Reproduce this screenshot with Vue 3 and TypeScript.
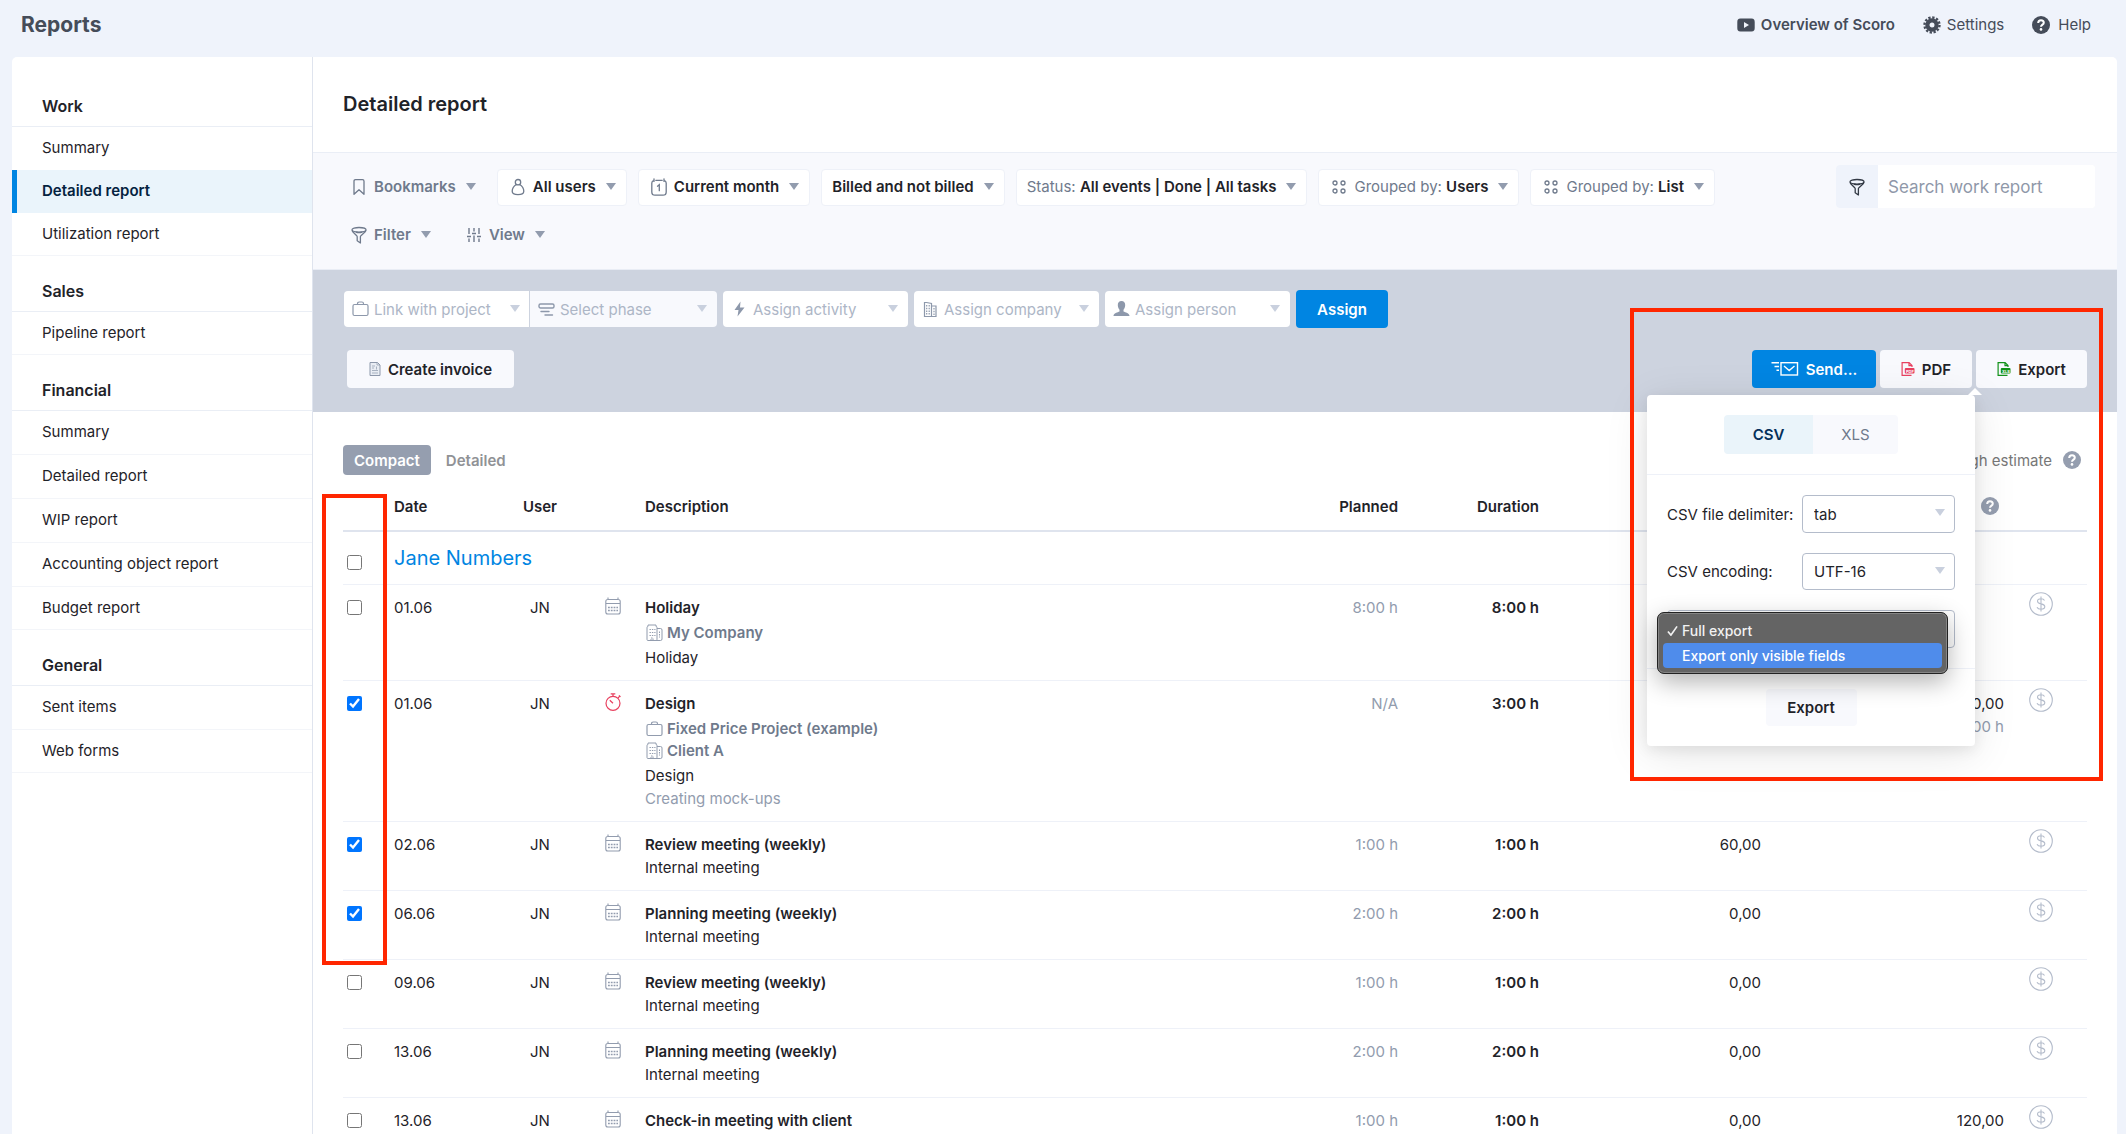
<script setup lang="ts">
import { ref } from 'vue'

interface NavGroup {
  title: string
  items: string[]
  ruled: boolean
}

interface Chip {
  icon?: string
  prefix?: string
  label: string
  plain?: boolean
}

interface Link {
  icon: string
  label: string
}

interface Row {
  id: number
  checked: boolean
  date: string
  kind: 'calendar' | 'stopwatch'
  title: string
  links?: Link[]
  activity?: string
  note?: string
  planned: string
  duration: string
  cost?: string
  income?: string
  incomeTime?: string
}

const navGroups: NavGroup[] = [
  { title: 'Work', items: ['Summary', 'Detailed report', 'Utilization report'], ruled: false },
  { title: 'Sales', items: ['Pipeline report'], ruled: true },
  {
    title: 'Financial',
    items: ['Summary', 'Detailed report', 'WIP report', 'Accounting object report', 'Budget report'],
    ruled: true,
  },
  { title: 'General', items: ['Sent items', 'Web forms'], ruled: true },
]

const chipRows: Chip[][] = [
  [
    { icon: 'bookmark', label: 'Bookmarks', plain: true },
    { icon: 'user', label: 'All users' },
    { icon: 'day', label: 'Current month' },
    { label: 'Billed and not billed' },
    { prefix: 'Status:', label: 'All events | Done | All tasks' },
    { icon: 'group', prefix: 'Grouped by:', label: 'Users' },
    { icon: 'group', prefix: 'Grouped by:', label: 'List' },
  ],
  [
    { icon: 'funnel', label: 'Filter', plain: true },
    { icon: 'sliders', label: 'View', plain: true },
  ],
]

const assignFields = [
  { icon: 'briefcase', label: 'Link with project', cls: 'joined-left' },
  { icon: 'phase', label: 'Select phase', cls: 'joined-right' },
  { icon: 'bolt', label: 'Assign activity', cls: '' },
  { icon: 'office', label: 'Assign company', cls: '' },
  { icon: 'person', label: 'Assign person', cls: '' },
]

const rows = ref<Row[]>([
  { id: 1, checked: false, date: '01.06', kind: 'calendar', title: 'Holiday', links: [{ icon: 'building', label: 'My Company' }], activity: 'Holiday', planned: '8:00 h', duration: '8:00 h' },
  { id: 2, checked: true, date: '01.06', kind: 'stopwatch', title: 'Design', links: [{ icon: 'briefcase', label: 'Fixed Price Project (example)' }, { icon: 'building', label: 'Client A' }], activity: 'Design', note: 'Creating mock-ups', planned: 'N/A', duration: '3:00 h', income: '360,00', incomeTime: '3:00 h' },
  { id: 3, checked: true, date: '02.06', kind: 'calendar', title: 'Review meeting (weekly)', activity: 'Internal meeting', planned: '1:00 h', duration: '1:00 h', cost: '60,00' },
  { id: 4, checked: true, date: '06.06', kind: 'calendar', title: 'Planning meeting (weekly)', activity: 'Internal meeting', planned: '2:00 h', duration: '2:00 h', cost: '0,00' },
  { id: 5, checked: false, date: '09.06', kind: 'calendar', title: 'Review meeting (weekly)', activity: 'Internal meeting', planned: '1:00 h', duration: '1:00 h', cost: '0,00' },
  { id: 6, checked: false, date: '13.06', kind: 'calendar', title: 'Planning meeting (weekly)', activity: 'Internal meeting', planned: '2:00 h', duration: '2:00 h', cost: '0,00' },
  { id: 7, checked: false, date: '13.06', kind: 'calendar', title: 'Check-in meeting with client', planned: '1:00 h', duration: '1:00 h', cost: '0,00', income: '120,00' },
])

const groupChecked = ref(false)
const delimiter = ref('tab')
const encoding = ref('UTF-16')
const scopeOptions = ['Full export', 'Export only visible fields']
const scope = ref(scopeOptions[0])
const hovered = ref(scopeOptions[1])
</script>

<template>
  <svg class="sprite" aria-hidden="true">
    <symbol id="caret" viewBox="0 0 10 7"><path d="M0 0h10L5 7z" fill="currentColor" /></symbol>
    <symbol id="bookmark" viewBox="0 0 16 18">
      <path d="M3 3.2Q3 1.7 4.500 1.700h7Q13 1.700 13 3.200V16.300L8 11.800 3 16.300z" fill="none" stroke="currentColor" stroke-width="1.300" stroke-linejoin="round" />
    </symbol>
    <symbol id="user" viewBox="0 0 16 18">
      <g fill="none" stroke="currentColor" stroke-width="1.300">
        <circle cx="8" cy="4.200" r="2.700" />
        <path d="M6.300 6.500C4 8 2.200 11 2.200 13.300 2.200 15.800 4.500 16.600 8 16.600s5.800-.8 5.800-3.300C13.800 11 12 8 9.700 6.500" />
      </g>
    </symbol>
    <symbol id="day" viewBox="0 0 16 18">
      <g fill="none" stroke="currentColor" stroke-width="1.300" stroke-linecap="round">
        <path d="M3 2.300C1.300 2.800.8 3.500.8 5v9c0 2 1 3.200 3.200 3.200h8c2.200 0 3.200-1.200 3.200-3.200V5c0-1.500-.5-2.200-2.200-2.700M4.800 2.300h6.400M3 .8v2.600M13 .8v2.600" />
        <path d="M6.500 8.200 8.300 6.700v6" />
      </g>
    </symbol>
    <symbol id="group" viewBox="0 0 16 18">
      <g fill="none" stroke="currentColor" stroke-width="1.300">
        <circle cx="4" cy="5" r="2" /><circle cx="12" cy="5" r="2" />
        <circle cx="4" cy="13" r="2" /><circle cx="12" cy="13" r="2" />
      </g>
    </symbol>
    <symbol id="funnel" viewBox="0 0 16 18">
      <g fill="none" stroke="currentColor" stroke-width="1.300" stroke-linejoin="round">
        <ellipse cx="8" cy="3.800" rx="7" ry="2.300" />
        <path d="M1 4.300C1.500 6.500 6 9 6.200 10.500v4.300l3.200 2.200v-6.500C9.600 9 14.500 6.500 15 4.300" />
        <path d="M4.800 6.200c2 .6 4.400.6 6.400 0" />
      </g>
    </symbol>
    <symbol id="sliders" viewBox="0 0 16 18">
      <path d="M3 2v6M8 2v3.500M13 2v6M3 12.500V16M8 9.500V16M13 12.500V16M1 10.500h4M6 7.500h4M11 10.500h4" fill="none" stroke="currentColor" stroke-width="1.400" />
    </symbol>
    <symbol id="briefcase" viewBox="0 0 17 18">
      <g fill="none" stroke="currentColor" stroke-width="1.200">
        <rect x="1" y="4.500" width="15" height="11" rx="1.500" />
        <path d="M5.500 4.500v-.8c0-1 .6-1.700 1.600-1.700h2.800c1 0 1.600.7 1.600 1.700v.8" />
      </g>
    </symbol>
    <symbol id="phase" viewBox="0 0 17 18">
      <g fill="none" stroke="currentColor" stroke-width="1.400" stroke-linecap="round">
        <rect x="1" y="4" width="15" height="4" rx="1.500" />
        <path d="M3 11.500h8M7 15h7.500" />
      </g>
    </symbol>
    <symbol id="bolt" viewBox="0 0 17 18"><path d="M9.500 1.500 3.500 10h4l-1 6.500 7-9H9z" fill="currentColor" /></symbol>
    <symbol id="office" viewBox="0 0 17 18">
      <g fill="none" stroke="currentColor" stroke-width="1.200">
        <path d="M2.500 16.500v-14h2l5 1v13zM9.500 6h4.500v10.500H9.500" />
        <path d="M4.700 5v10M7.200 5v10M12 8v7" stroke-dasharray="1.500 1.200" />
      </g>
    </symbol>
    <symbol id="building" viewBox="0 0 17 18">
      <g fill="none" stroke="currentColor" stroke-width="1">
        <path d="M1 15.500v-12q0-1 1-1V1h8v1.500q1 0 1 1v12q0 1-1 1H2q-1 0-1-1z" />
        <path d="M11 4.500h3.500q1.500 0 1.500 1.500v9q0 1.500-1.500 1.500H10" />
        <path d="M3.500 5.500h6M3.500 8.500h6M3.500 11.500h6" stroke-dasharray="1.400 1" />
        <path d="M5 16.500V14h2v2.500M13.500 7.500v6" stroke-dasharray="1.500 1" />
      </g>
    </symbol>
    <symbol id="person" viewBox="0 0 17 18">
      <path d="M8.500 1C11 1 12.300 2.800 12.200 5.200 12.100 7.500 11.200 9 10.500 9.800v1.700c1.800.9 6 1.500 6 4.500H.5c0-3 4.200-3.600 6-4.500V9.800C5.800 9 4.900 7.500 4.800 5.200 4.700 2.800 6 1 8.500 1z" fill="currentColor" />
    </symbol>
    <symbol id="invoice" viewBox="0 0 12 16">
      <g fill="none" stroke="currentColor" stroke-width="1">
        <path d="M1 1.500h7.500l2.500 2.500v10.500H1z" fill="#e9edf4" />
        <path d="M8 1.500V4h3M3 5h3M3 7h2M3 9.500h6M3 12h6M7.500 5.500v3" stroke-width=".7" />
      </g>
    </symbol>
    <symbol id="send" viewBox="0 0 28 16">
      <g fill="none" stroke="currentColor" stroke-width="1.400">
        <rect x="10" y="1.700" width="16.500" height="12.300" />
        <path d="m13 5 5.200 4.500L23.500 5M.5 1.700h7.500M3.500 5.500h4.500M5.500 9.300H8" />
      </g>
    </symbol>
    <symbol id="file" viewBox="0 0 14 16">
      <path d="M10.500 14.400H1.100V1.600h7L11 4.500V6M8 1.600v3h3" fill="none" stroke="currentColor" stroke-width="1.200" />
      <rect x="3.800" y="7" width="9.700" height="5.600" rx="1" fill="currentColor" />
    </symbol>
    <symbol id="play" viewBox="0 0 18 14">
      <path fill-rule="evenodd" d="M3.500.5h11C17 .5 17.700 1.700 17.700 4v6c0 2.300-.7 3.500-3.200 3.500h-11C1 13.500.3 12.300.3 10V4C.3 1.700 1 .5 3.500.5zM7 4v6l5-3z" fill="currentColor" />
    </symbol>
    <symbol id="gear" viewBox="0 0 18 18">
      <circle cx="9" cy="9" r="4.600" fill="none" stroke="currentColor" stroke-width="4.200" />
      <circle cx="9" cy="9" r="7.500" fill="none" stroke="currentColor" stroke-width="2.400" stroke-dasharray="2.300 1.627" />
    </symbol>
    <symbol id="help" viewBox="0 0 18 18">
      <circle cx="9" cy="9" r="9" fill="currentColor" />
      <path d="M6.200 7C6.200 5.200 7.400 4.200 9 4.200s2.800 1 2.800 2.500C11.800 8.600 9 8.700 9 10.800" fill="none" stroke="#fff" stroke-width="2" />
      <circle cx="9" cy="13.400" r="1.300" fill="#fff" />
    </symbol>
    <symbol id="calendar" viewBox="0 0 16 18">
      <g fill="none" stroke="currentColor" stroke-width="1.100">
        <path d="M.8 4.500Q.8 2.500 2.800 2.500h10.400q2 0 2 2V15q0 2-2 2H2.800q-2 0-2-2zM.8 6.500h14.400M3 .5v2M13 .5v2" />
        <path d="M3 10.500h10M3 13.500h10" stroke-width="1.500" stroke-dasharray="1.800 1" />
      </g>
    </symbol>
    <symbol id="stopwatch" viewBox="0 0 16 18">
      <g fill="none" stroke="currentColor" stroke-width="1.200">
        <circle cx="8" cy="10.300" r="7" />
        <path d="M8 3.300V1M5.700.8h4.600M13 5l1.800-1.800M14 2.400l1.500 1.500M8 10.300 4.800 7.200" />
      </g>
    </symbol>
    <symbol id="dollar" viewBox="0 0 24 24">
      <g fill="none" stroke="currentColor" stroke-width="1.100">
        <circle cx="12" cy="12" r="11.300" />
        <path d="M15.500 8.500C15 7.300 13.800 6.700 12 6.700c-2 0-3.500.9-3.500 2.500 0 3.600 7.300 1.800 7.300 5.400 0 1.700-1.700 2.700-3.800 2.700-2.200 0-3.500-.9-4-2.100M12 4.500v15" />
      </g>
    </symbol>
    <symbol id="tick" viewBox="0 0 12 12"><path d="m1 7 3.300 4L11 1.500" fill="none" stroke="currentColor" stroke-width="1.800" /></symbol>
  </svg>

  <div class="page">
    <header class="topbar">
      <h1>Reports</h1>
      <nav class="top-links">
        <a href="#overview" class="strong"><svg class="i-play"><use href="#play" /></svg>Overview of Scoro</a>
        <a href="#settings"><svg class="i18"><use href="#gear" /></svg>Settings</a>
        <a href="#help" class="help-link"><svg class="i18"><use href="#help" /></svg>Help</a>
      </nav>
    </header>

    <div class="sheet">
      <aside class="sidebar">
        <section v-for="(g, gi) in navGroups" :key="g.title" :class="{ ruled: g.ruled }">
          <h2>{{ g.title }}</h2>
          <ul>
            <li v-for="(item, i) in g.items" :key="item">
              <a href="#report" :class="{ active: gi === 0 && i === 1 }">{{ item }}</a>
            </li>
          </ul>
        </section>
      </aside>

      <main class="main">
        <div class="title"><h2>Detailed report</h2></div>

        <div class="filters">
          <div class="chips">
            <div v-for="(row, ri) in chipRows" :key="ri" class="chip-row">
              <button v-for="(c, ci) in row" :key="ci" type="button" class="chip" :class="{ plain: c.plain }">
                <svg v-if="c.icon" class="chip-icon"><use :href="'#' + c.icon" /></svg>
                <span><span v-if="c.prefix" class="prefix">{{ c.prefix }}&nbsp;</span>{{ c.label }}</span>
                <svg class="caret"><use href="#caret" /></svg>
              </button>
            </div>
          </div>
          <form class="search" @submit.prevent>
            <button type="button" aria-label="Search filters"><svg class="chip-icon"><use href="#funnel" /></svg></button>
            <input type="search" placeholder="Search work report" aria-label="Search work report" />
          </form>
        </div>

        <div class="bulk">
          <div class="assign">
            <label v-for="f in assignFields" :key="f.label" class="field" :class="f.cls">
              <svg class="field-icon"><use :href="'#' + f.icon" /></svg>
              <select :aria-label="f.label"><option>{{ f.label }}</option></select>
              <svg class="caret"><use href="#caret" /></svg>
            </label>
            <button type="button" class="btn primary assign-btn">Assign</button>
          </div>
          <div class="actions">
            <button type="button" class="btn invoice"><svg class="i-invoice"><use href="#invoice" /></svg>Create invoice</button>
            <div class="outputs">
              <button type="button" class="btn primary send"><svg class="i-send"><use href="#send" /></svg>Send...</button>
              <button type="button" class="btn pdf">
                <svg class="i-file red" aria-hidden="true"><use href="#file" /><text x="5" y="11.500">PDF</text></svg>PDF
              </button>
              <button type="button" class="btn export">
                <svg class="i-file green" aria-hidden="true"><use href="#file" /><text x="5" y="11.500">XLS</text></svg>Export
              </button>

              <div class="popover">
                <div class="format">
                  <div class="tabs">
                    <button type="button" class="on">CSV</button>
                    <button type="button">XLS</button>
                  </div>
                </div>
                <div class="options">
                  <div class="option">
                    <label for="delimiter">CSV file delimiter:</label>
                    <div class="picker">
                      <select id="delimiter" v-model="delimiter"><option>tab</option></select>
                      <svg class="caret"><use href="#caret" /></svg>
                    </div>
                  </div>
                  <div class="option">
                    <label for="encoding">CSV encoding:</label>
                    <div class="picker">
                      <select id="encoding" v-model="encoding"><option>UTF-16</option></select>
                      <svg class="caret"><use href="#caret" /></svg>
                    </div>
                  </div>
                  <div class="picker wide">
                    <select v-model="scope" aria-label="Export scope">
                      <option v-for="o in scopeOptions" :key="o">{{ o }}</option>
                    </select>
                    <ul class="menu" role="listbox">
                      <li v-for="o in scopeOptions" :key="o" role="option" :aria-selected="o === scope" :class="{ hover: o === hovered }" @mouseenter="hovered = o" @click="scope = o">
                        <span class="mark"><svg v-if="o === scope"><use href="#tick" /></svg></span>{{ o }}
                      </li>
                    </ul>
                  </div>
                </div>
                <div class="confirm"><button type="button" class="btn">Export</button></div>
              </div>
            </div>
          </div>
        </div>

        <div class="report">
          <div class="modes">
            <button type="button" class="mode on">Compact</button>
            <button type="button" class="mode">Detailed</button>
            <span class="estimate">Rough estimate<svg class="i18"><use href="#help" /></svg></span>
          </div>

          <table>
            <colgroup>
              <col class="c-check" /><col class="c-date" /><col class="c-user" /><col class="c-kind" /><col />
              <col class="c-planned" /><col class="c-duration" /><col class="c-cost" /><col class="c-income" /><col class="c-billed" />
            </colgroup>
            <thead>
              <tr>
                <th></th>
                <th>Date</th>
                <th class="mid">User</th>
                <th></th>
                <th>Description</th>
                <th class="num">Planned</th>
                <th class="num">Duration</th>
                <th></th>
                <th class="num"><svg class="i18 hint"><use href="#help" /></svg></th>
                <th></th>
              </tr>
            </thead>
            <tbody>
              <tr class="person-row">
                <td class="check"><input v-model="groupChecked" type="checkbox" aria-label="Select Jane Numbers" /></td>
                <td colspan="9"><a href="#jane">Jane Numbers</a></td>
              </tr>
              <tr v-for="r in rows" :key="r.id">
                <td class="check"><input v-model="r.checked" type="checkbox" :aria-label="'Select ' + r.title" /></td>
                <td>{{ r.date }}</td>
                <td class="mid">JN</td>
                <td class="kind" :class="r.kind"><svg><use :href="'#' + r.kind" /></svg></td>
                <td>
                  <div class="name">{{ r.title }}</div>
                  <div v-if="r.links" class="links">
                    <a v-for="l in r.links" :key="l.label" href="#item"><svg><use :href="'#' + l.icon" /></svg>{{ l.label }}</a>
                  </div>
                  <div v-if="r.activity">{{ r.activity }}</div>
                  <div v-if="r.note" class="muted">{{ r.note }}</div>
                </td>
                <td class="num muted">{{ r.planned }}</td>
                <td class="num name">{{ r.duration }}</td>
                <td class="num">{{ r.cost }}</td>
                <td class="num">{{ r.income }}<div v-if="r.incomeTime" class="muted">{{ r.incomeTime }}</div></td>
                <td class="billed"><svg><use href="#dollar" /></svg></td>
              </tr>
            </tbody>
          </table>
        </div>

        <div class="callout callout-select" aria-hidden="true"></div>
        <div class="callout callout-export" aria-hidden="true"></div>
      </main>
    </div>
  </div>
</template>

<style>
body {
  background: #eff3fb;
}
</style>

<style scoped>
.sprite {
  display: none;
}
.page,
.page button,
.page input,
.page select {
  font-family: Inter, 'Liberation Sans', sans-serif;
  font-size: 15px;
  color: #1f2329;
}
.page {
  height: 100vh;
  overflow: hidden;
  display: flex;
  flex-direction: column;
  line-height: 23px;
  background: #eff3fb;
}
.page * {
  box-sizing: border-box;
}
h1,
h2,
ul {
  margin: 0;
  padding: 0;
  list-style: none;
}
a {
  color: inherit;
  text-decoration: none;
}
button {
  border: 0;
  padding: 0;
  background: none;
  cursor: pointer;
}
svg {
  flex: none;
}
.i18 {
  width: 18px;
  height: 18px;
}
.caret {
  width: 10px;
  height: 7px;
  color: #929cae;
}

/* Top bar */
.topbar {
  flex: none;
  height: 57px;
  padding: 0 35px 8px 21px;
  display: flex;
  align-items: center;
  justify-content: space-between;
  color: #454c59;
}
.topbar h1 {
  font-size: 21px;
  font-weight: 700;
}
.top-links {
  display: flex;
  gap: 28px;
}
.top-links a {
  display: flex;
  align-items: center;
  gap: 6px;
}
.top-links .help-link {
  gap: 8px;
}
.i-play {
  width: 18px;
  height: 14px;
}
.strong {
  font-weight: 600;
}

/* Sheet and sidebar */
.sheet {
  flex: 1;
  min-height: 0;
  margin: 0 9px 0 12px;
  display: flex;
  background: #fff;
  border-radius: 5px 5px 0 0;
}
.sidebar {
  flex: none;
  width: 301px;
  padding-top: 14px;
  border-right: 1px solid #dfe4ee;
}
.sidebar h2 {
  padding: 24px 30px 8px;
  border-bottom: 1px solid #eaeef5;
  font-size: 16px;
  font-weight: 600;
}
.sidebar ul {
  border-bottom: 1px solid #f3f5f9;
}
.sidebar .ruled li + li {
  border-top: 1px solid #f3f5f9;
}
.sidebar li a {
  display: block;
  padding: 9px 30px 11px;
}
.sidebar li:last-child a {
  padding-bottom: 10px;
}
.sidebar li a.active {
  background: #eaf4fb;
  border-left: 5px solid #0085e2;
  padding-left: 25px;
  color: #04223f;
  font-weight: 600;
}

/* Main column */
.main {
  flex: 1;
  min-width: 0;
  position: relative;
}
.title {
  padding: 36px 30px;
  border-bottom: 1px solid #eaeef6;
}
.title h2 {
  font-size: 20px;
  font-weight: 600;
}
.filters {
  display: flex;
  justify-content: space-between;
  align-items: flex-start;
  padding: 12px 22px 11px 24px;
  background: #f8f9fd;
  border-bottom: 1px solid #e9edf5;
}
.chips {
  display: flex;
  flex-direction: column;
  gap: 11px;
  padding: 4px 0;
}
.chip-row {
  display: flex;
  gap: 11px;
}
.chip {
  height: 37px;
  padding: 0 10px 2px;
  display: flex;
  align-items: center;
  border: 1px solid #eef1f8;
  border-radius: 4px;
  background: #fff;
  font-weight: 600;
  white-space: nowrap;
}
.chip .caret {
  margin-left: 10px;
}
.page .chip.plain {
  padding: 0 9px 2px 13px;
  border-color: transparent;
  background: none;
  color: #6f7a8c;
}
.page .prefix {
  font-weight: 400;
  color: #6f7a8c;
}
.chip-icon {
  width: 16px;
  height: 18px;
  margin: 0 7px 0 2px;
  color: #6f7a8c;
}
.plain .chip-icon {
  margin-left: 0;
}
.search {
  display: flex;
  width: 259px;
  height: 43px;
  border-radius: 4px;
  overflow: hidden;
  background: #fff;
}
.search button {
  width: 42px;
  background: #eff3fb;
}
.search .chip-icon {
  display: block;
  margin: 0 auto;
  color: #333a45;
}
.page .search input {
  flex: 1;
  min-width: 0;
  padding: 0 10px;
  border: 0;
  outline: 0;
  background: #fff;
  font-size: 17px;
}
.search input::placeholder {
  color: #8f98a9;
}

/* Bulk edit band */
.bulk {
  padding: 20px 30px 24px 31px;
  background: #cdd3df;
}
.assign {
  display: flex;
  align-items: center;
}
.field {
  position: relative;
  width: 185px;
  height: 36px;
  margin-right: 6px;
  color: #8d98ab;
}
.field select {
  width: 100%;
  height: 100%;
  padding: 0 30px;
  border: 0;
  border-radius: 4px;
  appearance: none;
  background: #fff;
}
.page .field select {
  color: #adb6c6;
}
.field-icon {
  position: absolute;
  left: 8px;
  top: 9px;
  width: 17px;
  height: 18px;
}
.field .caret,
.picker .caret {
  position: absolute;
  right: 10px;
  top: 14px;
  color: #c9d0de;
}
.field.joined-left {
  width: 186px;
  margin-right: 0;
}
.field.joined-right {
  width: 187px;
}
.joined-left select {
  border-radius: 4px 0 0 4px;
  border-right: 1px solid #cdd3df;
}
.joined-right select {
  border-radius: 0 4px 4px 0;
  background: #f8f9fd;
}
.btn {
  height: 38px;
  display: flex;
  align-items: center;
  justify-content: center;
  gap: 7px;
  border-radius: 4px;
  background: #f8f9fd;
  font-weight: 600;
}
.page .primary {
  background: #0085e2;
  color: #fff;
}
.assign-btn {
  width: 92px;
}
.actions {
  display: flex;
  justify-content: space-between;
  margin: 22px 0 0 3px;
}
.invoice {
  width: 167px;
}
.i-invoice {
  width: 12px;
  height: 16px;
  color: #8d98ab;
}
.outputs {
  display: flex;
  gap: 4px;
  position: relative;
}
.send {
  width: 124px;
}
.pdf {
  width: 92px;
}
.export {
  width: 111px;
}
.i-send {
  width: 28px;
  height: 16px;
}
.i-file {
  width: 14px;
  height: 16px;
}
.i-file text {
  fill: #fff;
  font-size: 4px;
  font-weight: 700;
}
.red {
  color: #e8405f;
}
.green {
  color: #12921a;
}

/* Export popover */
.popover {
  position: absolute;
  z-index: 5;
  top: 45px;
  right: 112px;
  width: 328px;
  background: #fff;
  border-radius: 4px;
  box-shadow: 0 8px 44px rgba(0, 0, 0, 0.1), 0 4px 14px rgba(0, 0, 0, 0.08);
}
.popover::before {
  content: '';
  position: absolute;
  top: -7px;
  right: -7px;
  border: 7px solid transparent;
  border-top-width: 0;
  border-bottom-color: #fff;
}
.format {
  padding: 20px 0;
  border-bottom: 1px solid #eef1f8;
}
.tabs {
  display: flex;
  width: 174px;
  margin: 0 auto;
  border-radius: 4px;
  overflow: hidden;
}
.page .tabs button {
  flex: 1;
  height: 39px;
  background: #f8f9fd;
  color: #6f7a8c;
}
.page .tabs .on {
  flex: none;
  width: 89px;
  background: #eaf4fa;
  color: #04305a;
  font-weight: 600;
}
.options {
  padding: 20px;
  border-bottom: 1px solid #eef1f8;
}
.option {
  display: flex;
  align-items: center;
  justify-content: space-between;
  margin-bottom: 20px;
}
.picker {
  position: relative;
  width: 153px;
  height: 38px;
}
.option + .option .picker {
  height: 37px;
}
.picker.wide {
  width: 100%;
}
.picker select {
  width: 100%;
  height: 100%;
  padding: 0 11px;
  border: 1px solid #b4bccb;
  border-radius: 4px;
  appearance: none;
  background: #fff;
}
.menu {
  position: absolute;
  top: 2px;
  left: -10px;
  width: 291px;
  padding: 5px;
  border: 1px solid #222;
  border-radius: 7px;
  background: #646464;
  box-shadow: inset 0 0 0 1px #858585, 0 8px 24px rgba(0, 0, 0, 0.3);
  color: #f1f1f1;
  font-size: 14px;
  font-weight: 500;
}
.menu li {
  height: 25px;
  padding: 0 4px;
  display: flex;
  align-items: center;
  border-radius: 4px;
}
.menu .hover {
  background: #4f8ceb;
  color: #fff;
}
.mark {
  width: 15px;
  display: flex;
}
.mark svg {
  width: 11px;
  height: 11px;
}
.confirm {
  padding: 20px;
  display: flex;
  justify-content: center;
}
.confirm .btn {
  width: 91px;
  height: 37px;
}

/* Report table */
.report {
  padding: 33px 30px 0;
}
.modes {
  display: flex;
  align-items: center;
  margin-bottom: 7px;
}
.page .mode {
  height: 30px;
  padding: 0 11px;
  margin-right: 4px;
  border-radius: 4px;
  color: #909296;
  font-weight: 600;
}
.page .mode.on {
  background: #959eaf;
  color: #fff;
}
.estimate {
  margin: 0 6px 0 auto;
  display: flex;
  align-items: center;
  gap: 11px;
  color: #777;
}
.estimate svg,
.hint {
  color: #959eaf;
}
.hint {
  display: block;
  margin: 2px 5px 3px auto;
}
table {
  width: 100%;
  table-layout: fixed;
  border-collapse: separate;
  border-spacing: 0;
}
.c-check {
  width: 51px;
}
.c-date {
  width: 106px;
}
.c-user {
  width: 80px;
}
.c-kind {
  width: 65px;
}
.c-planned {
  width: 150px;
}
.c-duration {
  width: 141px;
}
.c-cost {
  width: 222px;
}
.c-income {
  width: 243px;
}
.c-billed {
  width: 83px;
}
th {
  padding: 13px 0 12px;
  border-bottom: 2px solid #dfe4ee;
  font-weight: 600;
  text-align: left;
}
td {
  padding: 11px 0;
  border-bottom: 1px solid #eef1f8;
  vertical-align: top;
}
.mid {
  text-align: center;
}
.num {
  text-align: right;
}
.check {
  padding: 15px 4px;
}
.check input {
  display: block;
  width: 15px;
  height: 15px;
  margin: 0;
}
.person-row td {
  padding: 15px 0 14px;
}
.person-row .check {
  padding: 23px 4px 0;
}
.person-row a {
  display: block;
  font-size: 20px;
  color: #0085e2;
}
.kind {
  padding-top: 12px;
}
.kind svg {
  display: block;
  width: 16px;
  height: 18px;
  margin: 0 auto;
}
.calendar {
  color: #929cae;
}
.stopwatch {
  color: #e8405f;
}
.name {
  font-weight: 600;
}
.links {
  padding: 3px 0 2px;
  line-height: 22px;
}
.links a {
  display: flex;
  align-items: center;
  gap: 4px;
  color: #6f7a8c;
  font-weight: 600;
}
.links svg {
  width: 17px;
  height: 18px;
  margin-left: 1px;
  color: #929cae;
}
.muted {
  color: #929cae;
}
.billed {
  padding: 7px 10px 0 0;
  color: #b4bccb;
}
.billed svg {
  display: block;
  width: 24px;
  height: 24px;
  margin: 0 auto;
}

/* Highlight frames */
.callout {
  position: absolute;
  z-index: 6;
  border: 4px solid #ff2600;
  pointer-events: none;
}
.callout-select {
  top: 437px;
  left: 9px;
  width: 65px;
  height: 471px;
}
.callout-export {
  top: 251px;
  right: 14px;
  width: 473px;
  height: 473px;
}
</style>
